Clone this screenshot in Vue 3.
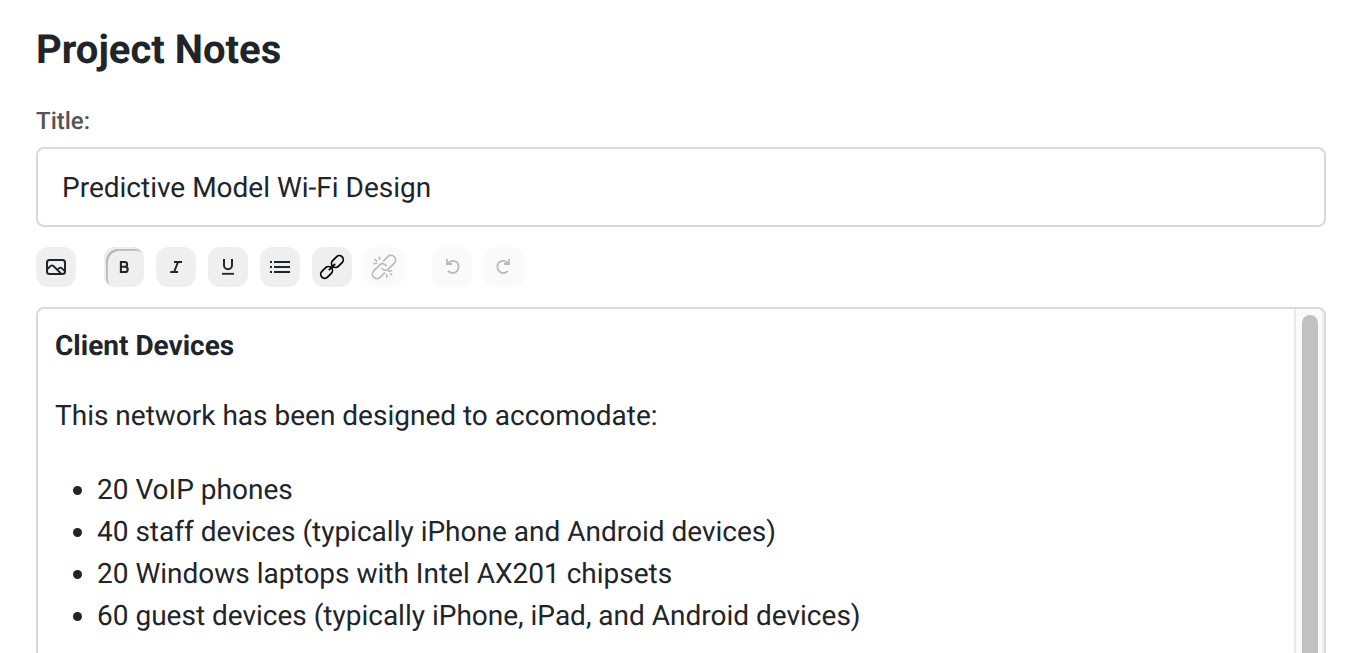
<script setup>
const groups = [
  [{ id: 'image', label: 'Insert image' }],
  [
    { id: 'bold', label: 'Bold', active: true },
    { id: 'italic', label: 'Italic' },
    { id: 'underline', label: 'Underline' },
    { id: 'list', label: 'Bulleted list' },
    { id: 'link', label: 'Link' },
    { id: 'unlink', label: 'Remove link', disabled: true },
  ],
  [
    { id: 'undo', label: 'Undo', disabled: true },
    { id: 'redo', label: 'Redo', disabled: true },
  ],
]

const icons = {
  image: [
    { d: 'M13.5 13H26.5Q29 13 29 15.5V24.5Q29 27 26.5 27H13.5Q11 27 11 24.5V15.5Q11 13 13.5 13Z', w: 2 },
    { d: 'M11.5 22L14.6 18.9Q16 17.7 17.4 19L25 26.5M21.5 22.5L23.2 21.1Q24.5 20.2 25.7 21.2L29 24.3', w: 1.8 },
  ],
  bold: [{ d: 'M16.9 15H20.7Q23.1 15 23.1 17.4Q23.1 19.8 20.7 19.8H16.9ZM16.9 19.8H21.1Q23.7 19.8 23.7 22.4Q23.7 25 21.1 25H16.9Z', w: 2.1 }],
  italic: [{ d: 'M18 15H26M14.3 25H22M22 15L18.1 25', w: 2 }],
  underline: [
    { d: 'M16 12V18.2A4 4 0 0 0 24 18.2V12', w: 2 },
    { d: 'M14 26.8H26', w: 1.8 },
  ],
  list: [{ d: 'M10 15H12M14 15H30M10 20H12M14 20H30M10 25H12M14 25H30', w: 2 }],
  link: [
    { d: 'M24.47 9.87A4 4 0 0 1 30.13 15.53L26.33 19.33A4 4 0 0 1 20.67 13.67Z', w: 1.7 },
    { d: 'M15.53 30.13A4 4 0 0 1 9.87 24.47L13.67 20.67A4 4 0 0 1 19.33 26.33Z', w: 1.7 },
    { d: 'M16.8 23.2L23.2 16.8', w: 1.7 },
  ],
  unlink: [
    { d: 'M17.6 20.6C18.2 22.8 21.6 24.4 24 22.3L30.35 16.15A4.6 4.6 0 0 0 23.85 9.65L19 14.5', w: 1.7 },
    { d: 'M22.4 19.4C21.8 17.2 18.4 15.6 16 17.7L9.65 23.85A4.6 4.6 0 0 0 16.15 30.35L21 25.5', w: 1.7 },
    { d: 'M10.4 12.2L13.2 14.3M15.2 9.6L15.8 13M9.2 16.7L13.3 16.3M23.9 24.2L28.2 23.8M26.1 26.2L28.2 28.3M22.9 27L22.6 31', w: 1.6 },
  ],
  undo: [{ d: 'M15 12V17M14 17H20M15.4 16.8C17.2 14.7 20 13.3 22.7 14.2C25.2 15 26.7 17.4 26.6 20C26.5 23.6 23.7 26 20.8 26C18.8 26 17.2 25.1 16.1 23.8', w: 1.8 }],
  redo: [{ d: 'M25 12V17M26 17H20M24.6 16.8C22.8 14.7 20 13.3 17.3 14.2C14.8 15 13.3 17.4 13.4 20C13.5 23.6 16.3 26 19.2 26C21.2 26 22.8 25.1 23.9 23.8', w: 1.8 }],
}

const devices = [
  '20 VoIP phones',
  '40 staff devices (typically iPhone and Android devices)',
  '20 Windows laptops with Intel AX201 chipsets',
  '60 guest devices (typically iPhone, iPad, and Android devices)',
]
</script>

<template>
  <main class="page">
    <h1>Project Notes</h1>
    <label for="note-title">Title:</label>
    <input id="note-title" class="title-input" type="text" value="Predictive Model Wi-Fi Design" />
    <div class="toolbar">
      <div v-for="(group, i) in groups" :key="i" class="group">
        <button
          v-for="tool in group"
          :key="tool.id"
          type="button"
          class="tool"
          :class="[tool.id, { active: tool.active }]"
          :disabled="tool.disabled"
          :aria-label="tool.label"
        >
          <svg viewBox="0 0 40 40" width="40" height="40">
            <path v-for="(p, n) in icons[tool.id]" :key="n" :d="p.d" :stroke-width="p.w" />
          </svg>
        </button>
      </div>
    </div>
    <section class="editor">
      <div class="content">
        <p><strong>Client Devices</strong></p>
        <p>This network has been designed to accomodate:</p>
        <ul>
          <li v-for="device in devices" :key="device">{{ device }}</li>
        </ul>
      </div>
      <div class="track"><div class="thumb"></div></div>
    </section>
  </main>
</template>

<style>
body {
  margin: 0;
  overflow: hidden;
  background: #fff;
}
</style>

<style scoped>
.page {
  box-sizing: border-box;
  height: 653px;
  padding: 26px 36px 0;
  overflow: hidden;
  display: flex;
  flex-direction: column;
  font-family: Roboto, "Liberation Sans", sans-serif;
  font-size: 28px;
  line-height: 42px;
  color: #212529;
  text-rendering: geometricPrecision;
}
h1 {
  margin: 0;
  font-size: 40px;
  line-height: 48px;
  font-weight: 700;
}
label {
  margin-top: 29px;
  font-size: 24px;
  line-height: 36px;
  font-weight: 500;
  color: #555;
}
.title-input {
  box-sizing: border-box;
  flex: none;
  width: 100%;
  height: 80px;
  margin: 8px 0 0;
  padding: 0 24px;
  border: 2px solid #d9d9d9;
  border-radius: 8px;
  background: #fff;
  color: #212529;
  font: inherit;
  text-rendering: inherit;
  outline: none;
}
.toolbar {
  display: flex;
  gap: 28px;
  margin-top: 20px;
}
.group {
  display: flex;
  gap: 12px;
}
.tool {
  display: block;
  width: 40px;
  height: 40px;
  padding: 0;
  border: 0;
  border-radius: 12px;
  background: #efefef;
  color: #212529;
}
.tool.active {
  box-shadow: inset 2px 2px 0 #efefef, inset 4px 4px 0 -0.2px #b8b8b8;
}
.tool.link {
  color: #000;
}
.tool:disabled {
  background: #fafafa;
  color: #bababa;
}
.tool svg {
  display: block;
  fill: none;
  stroke: currentColor;
}
.editor {
  box-sizing: border-box;
  flex: none;
  display: flex;
  height: 400px;
  margin-top: 20px;
  border: 2px solid #d9d9d9;
  border-radius: 8px;
  overflow: hidden;
}
.content {
  flex: 1;
  padding: 16px 17px;
}
p {
  margin: 0 0 28px;
}
ul {
  margin: 32px 0 0;
  padding-left: 42px;
}
.track {
  box-sizing: border-box;
  width: 30px;
  padding: 6px 6px 0;
  border-left: 2px solid #e8e8e8;
  border-right: 2px solid #ededed;
  background: #fafafa;
}
.thumb {
  width: 16px;
  height: 500px;
  border-radius: 8px;
  background: #c1c1c1;
}
</style>
